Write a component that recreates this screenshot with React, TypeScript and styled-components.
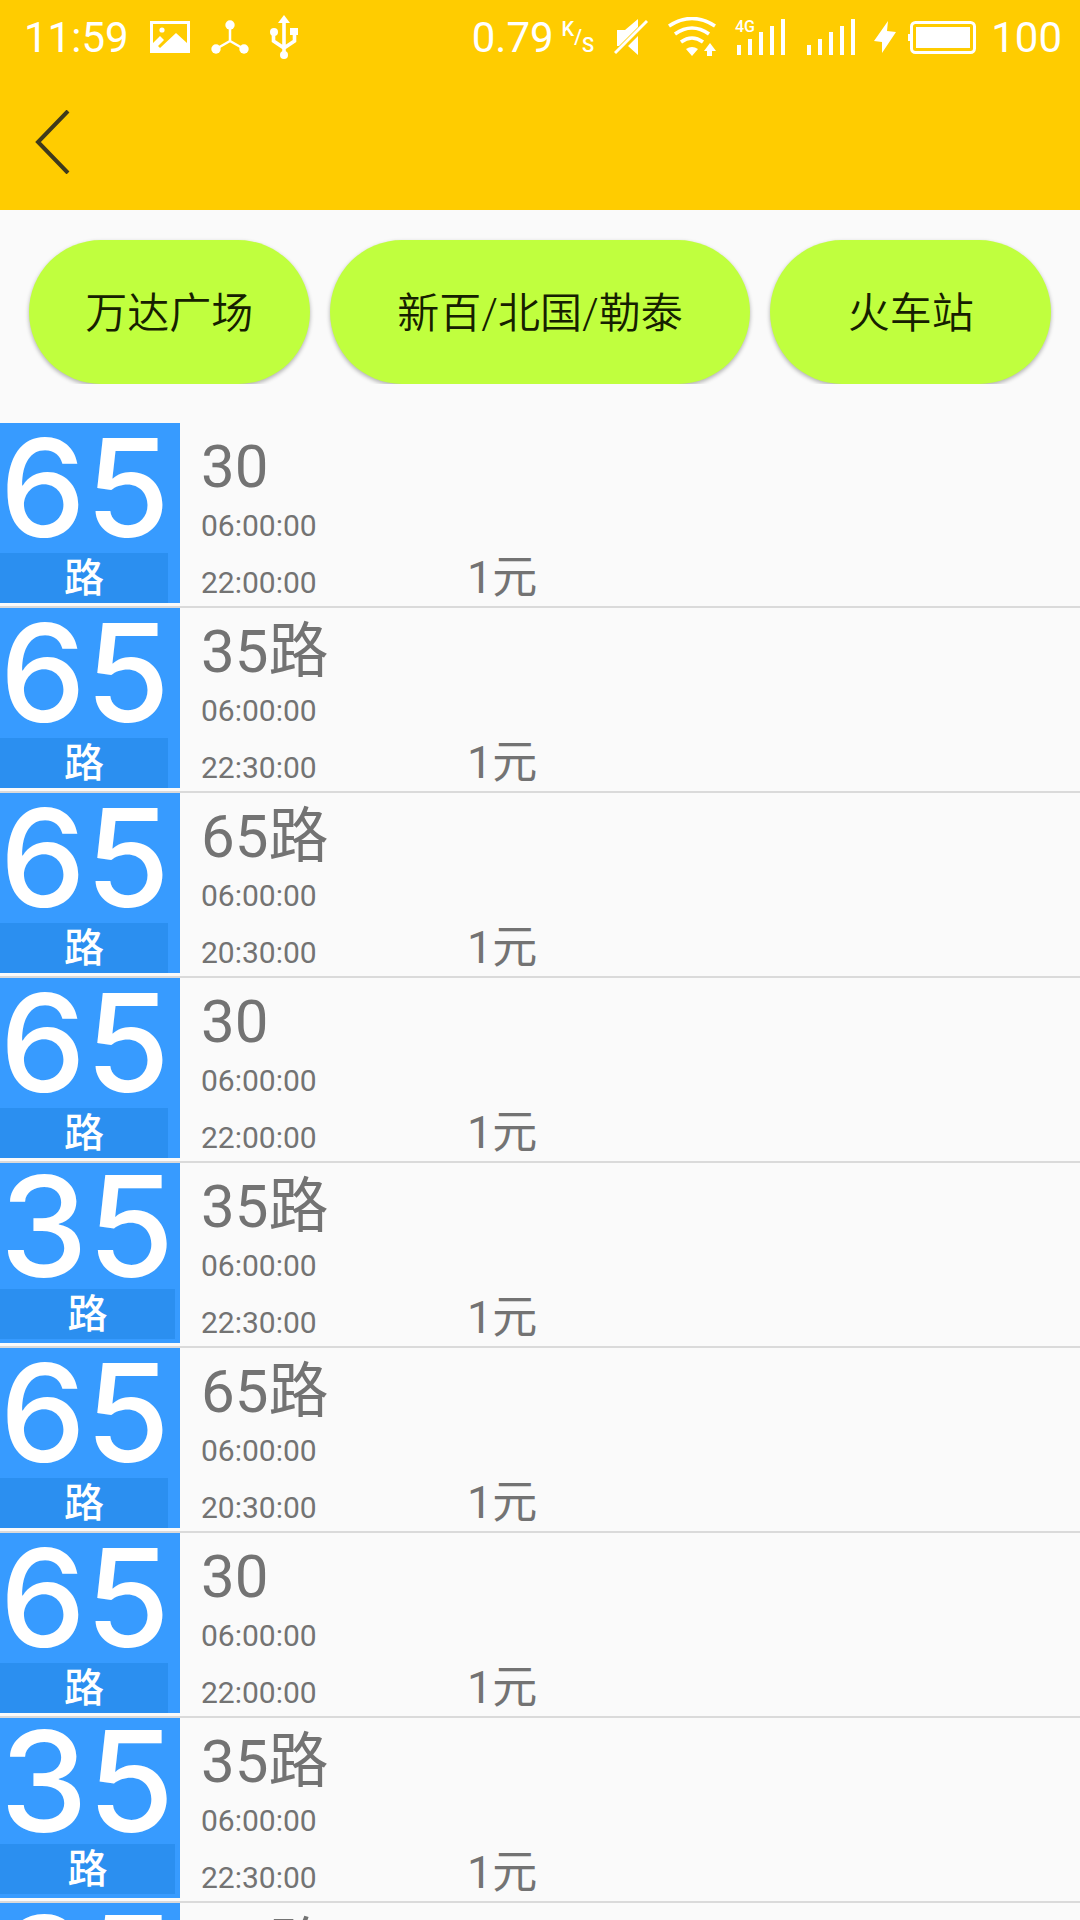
import React from 'react';
import styled, { createGlobalStyle } from 'styled-components';

const GlobalStyle = createGlobalStyle`
  * { box-sizing: border-box; }
  html, body, #root { height: 100%; }
  body {
    margin: 0;
    background: #fafafa;
    font-family: Roboto, "Noto Sans CJK SC", sans-serif;
  }
`;

const Screen = styled.div`
  height: 100vh;
  display: flex;
  flex-direction: column;
  overflow: hidden;
`;

const Header = styled.header`
  flex: none;
  background: #ffcc00;
  color: #fff;
`;

const StatusBar = styled.div`
  height: 74px;
  display: flex;
  align-items: center;
  justify-content: space-between;
  padding: 0 18px 0 24px;
  font-size: 42px;
`;

const StatusGroup = styled.div<{ $gap: number }>`
  display: flex;
  align-items: center;
  gap: ${(p) => p.$gap}px;
`;

const Unit = styled.span`
  display: flex;
  font-size: 20px;
  line-height: 20px;
  font-weight: 500;
`;

const UnitPart = styled.span<{ $drop: number }>`
  padding-top: ${(p) => p.$drop}px;
`;

const Icon = styled.svg`
  display: block;
  flex: none;
`;

const NavBar = styled.nav`
  height: 136px;
  display: flex;
  align-items: center;
`;

const BackButton = styled.button`
  height: 136px;
  padding: 0 30px 0 35px;
  border: 0;
  background: none;
`;

const Destinations = styled.div`
  flex: none;
  display: flex;
  gap: 20px;
  margin-bottom: 39px;
  padding: 30px 29px 0;
  overflow: hidden;
`;

const Destination = styled.button<{ $grow: number }>`
  flex: ${(p) => p.$grow} 1 0;
  height: 144px;
  padding: 0 0 6px;
  border: 0;
  border-radius: 72px;
  background: #c0ff3e;
  box-shadow: 0 2px 4px rgba(0, 0, 0, 0.3);
  color: #162000;
  font: 350 42px Roboto, "Noto Sans CJK SC", sans-serif;
  white-space: nowrap;
`;

const RouteList = styled.ul`
  flex: 1;
  min-height: 0;
  overflow: hidden;
  margin: 0;
  padding: 0;
  list-style: none;
`;

const Route = styled.li`
  display: flex;
  height: 185px;
  border-bottom: 2px solid #dadada;
  color: #737373;
`;

const Badge = styled.div`
  width: 180px;
  height: 180px;
  flex: none;
  display: flex;
  flex-direction: column;
  background: #379bff;
  color: #fff;
`;

const BadgeNumber = styled.div<{ $wide: boolean }>`
  height: ${(p) => (p.$wide ? 126 : 130)}px;
  font: 500 ${(p) => (p.$wide ? 140 : 136)}px/${(p) => (p.$wide ? 126 : 130)}px Inter, "Liberation Sans", sans-serif;
`;

const BadgeUnit = styled.div<{ $wide: boolean }>`
  width: ${(p) => (p.$wide ? 175 : 168)}px;
  height: 50px;
  background: #2b8ff0;
  font: 500 40px/44px "Noto Sans CJK SC", sans-serif;
  text-align: center;
`;

const Details = styled.div`
  width: 267px;
  padding: 9px 0 0 21px;
  font-size: 30px;
`;

const RouteName = styled.div`
  height: 70px;
  font-size: 60px;
  line-height: 70px;
`;

const Time = styled.div`
  height: 57px;
  line-height: 48px;
`;

const Price = styled.div`
  align-self: flex-end;
  padding: 0 0 2px 20px;
  font-size: 45px;
  line-height: 53px;
`;

interface RouteInfo {
  badge: string;
  name: string;
  first: string;
  last: string;
}

const routes: RouteInfo[] = [
  { badge: '65', name: '30', first: '06:00:00', last: '22:00:00' },
  { badge: '65', name: '35路', first: '06:00:00', last: '22:30:00' },
  { badge: '65', name: '65路', first: '06:00:00', last: '20:30:00' },
  { badge: '65', name: '30', first: '06:00:00', last: '22:00:00' },
  { badge: '35', name: '35路', first: '06:00:00', last: '22:30:00' },
  { badge: '65', name: '65路', first: '06:00:00', last: '20:30:00' },
  { badge: '65', name: '30', first: '06:00:00', last: '22:00:00' },
  { badge: '35', name: '35路', first: '06:00:00', last: '22:30:00' },
  { badge: '35', name: '65路', first: '06:00:00', last: '20:30:00' },
];

const destinations = [
  { label: '万达广场', grow: 2 },
  { label: '新百/北国/勒泰', grow: 3 },
  { label: '火车站', grow: 2 },
];

const PictureIcon = () => (
  <Icon width="40" height="32" viewBox="0 0 40 32">
    <path fill="#fff" fillRule="evenodd" d="M0 0H40V32H0ZM3 3V22L10 15L14 19L8 25L10 27L26 12L37 22V3Z" />
    <circle cx="12" cy="9" r="2.6" fill="#fff" />
  </Icon>
);

const HubIcon = () => (
  <Icon width="38" height="34" viewBox="0 0 38 34">
    <path d="M19 5V21M19 21L5 29M19 21L33 29" stroke="#fff" strokeWidth="2.5" />
    <circle cx="19" cy="5" r="4.7" fill="#fff" />
    <circle cx="5" cy="29" r="4.7" fill="#fff" />
    <circle cx="33" cy="29" r="4.7" fill="#fff" />
  </Icon>
);

const UsbIcon = () => (
  <Icon width="28" height="44" viewBox="0 0 28 44">
    <path d="M14 4V40M3.5 16V26L14 33L24.5 26V16" fill="none" stroke="#fff" strokeWidth="3.6" />
    <path d="M8 8L14 0L20 8Z" fill="#fff" />
    <circle cx="4" cy="17" r="4" fill="#fff" />
    <path d="M20 13H28V20H20Z" fill="#fff" />
    <circle cx="14" cy="40" r="4" fill="#fff" />
  </Icon>
);

const MuteIcon = () => (
  <Icon width="34" height="36" viewBox="0 0 34 36">
    <path fill="#fff" d="M3 11H11L24 0V8L5 27H3ZM24 17V36L14 27Z" />
    <path d="M1 34L33 2" stroke="#fff" strokeWidth="3" />
  </Icon>
);

const WifiIcon = () => (
  <Icon width="48" height="40" viewBox="0 0 48 40">
    <path
      d="M1 9Q24 -6 47 9M7 17Q24 5 41 17M13 25Q24 17 35 25"
      fill="none" stroke="#fff" strokeWidth="3.6"
    />
    <path fill="#fff" d="M18 32Q24 28 30 32L24 39ZM42 26L48 34H44V39H39V34H36Z" />
  </Icon>
);

const SignalIcon = ({ network }: { network?: string }) => (
  <Icon width="52" height="36" viewBox="0 0 52 36">
    <path
      fill="#fff"
      d="M3 26H7V36H3ZM14 20H18V36H14ZM25 13H29V36H25ZM36 7H40V36H36ZM47 0H51V36H47Z"
    />
    {network && <text x="1" y="13" fill="#fff" fontSize="16" fontWeight="500">{network}</text>}
  </Icon>
);

const BatteryIcon = () => (
  <Icon width="102" height="34" viewBox="0 0 102 34">
    <path fill="#fff" d="M14 1L0 21L8 22V33L22 12L13 11Z" />
    <rect x="37.5" y="2.5" width="63" height="30" rx="4" fill="none" stroke="#fff" strokeWidth="3" />
    <path fill="#fff" d="M42 7H96V28H42ZM34 14H37V21H34Z" />
  </Icon>
);

export default function App() {
  return (
    <Screen>
      <GlobalStyle />
      <Header>
        <StatusBar>
          <StatusGroup $gap={21}>
            <span>11:59</span>
            <PictureIcon />
            <HubIcon />
            <UsbIcon />
          </StatusGroup>
          <StatusGroup $gap={15}>
            <StatusGroup $gap={18}>
              <StatusGroup $gap={20}>
                <StatusGroup $gap={8}>
                  <span>0.79</span>
                  <Unit>
                    <UnitPart $drop={0}>K</UnitPart>
                    <UnitPart $drop={8}>/</UnitPart>
                    <UnitPart $drop={16}>S</UnitPart>
                  </Unit>
                </StatusGroup>
                <MuteIcon />
                <WifiIcon />
              </StatusGroup>
              <SignalIcon network="4G" />
              <SignalIcon />
              <BatteryIcon />
            </StatusGroup>
            <span>100</span>
          </StatusGroup>
        </StatusBar>
        <NavBar>
          <BackButton aria-label="返回">
            <Icon width="36" height="64" viewBox="0 0 36 64">
              <path d="M33 1L3 32L33 63" fill="none" stroke="#3f3a1c" strokeWidth="4" />
            </Icon>
          </BackButton>
        </NavBar>
      </Header>
      <Destinations>
        {destinations.map((d) => (
          <Destination key={d.label} $grow={d.grow}>{d.label}</Destination>
        ))}
      </Destinations>
      <RouteList>
        {routes.map((r, i) => (
          <Route key={i}>
            <Badge>
              <BadgeNumber $wide={r.badge === '35'}>{r.badge}</BadgeNumber>
              <BadgeUnit $wide={r.badge === '35'}>路</BadgeUnit>
            </Badge>
            <Details>
              <RouteName>{r.name}</RouteName>
              <Time>{r.first}</Time>
              <Time>{r.last}</Time>
            </Details>
            <Price>1元</Price>
          </Route>
        ))}
      </RouteList>
    </Screen>
  );
}
